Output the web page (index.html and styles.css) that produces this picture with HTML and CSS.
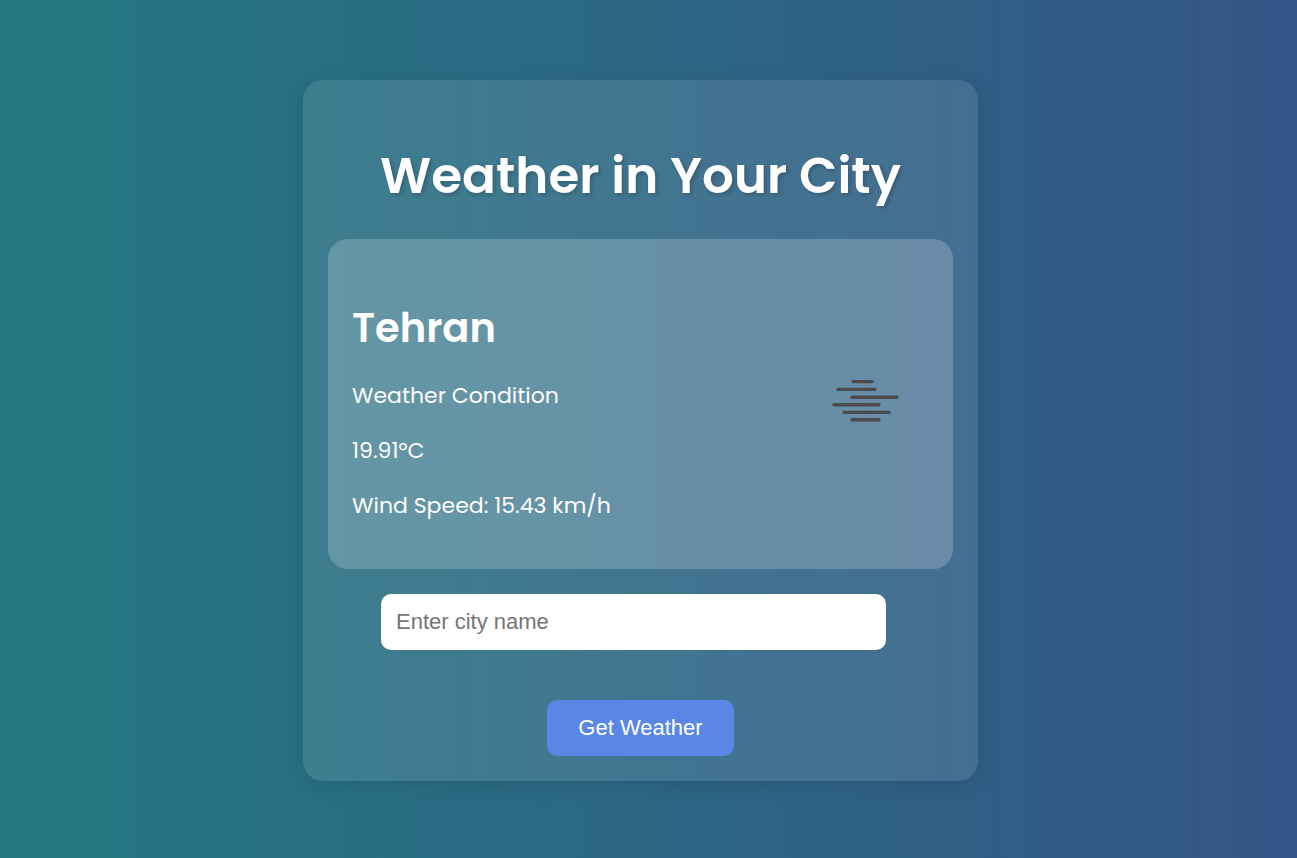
FILE: index.html
```
<!DOCTYPE html>
<html lang="en">
<head>
<meta charset="utf-8">
<meta name="viewport" content="width=device-width, initial-scale=1">
<title>Weather in Your City</title>
<link rel="stylesheet" href="styles.css">
</head>
<body>
<main class="container">
  <h1 class="title">Weather in Your City</h1>
  <section class="weather">
    <div class="details">
      <h2 class="city">Tehran</h2>
      <p class="line">Weather Condition</p>
      <p class="line">19.91°C</p>
      <p class="line">Wind Speed: 15.43 km/h</p>
    </div>
    <svg class="icon" viewBox="0 0 126 126" role="img" aria-label="Mist">
      <g stroke="#4b4b4d" stroke-width="3.4" stroke-linecap="round">
        <path d="M51 40.6H70M36 48.4H73M50 56.2H95M32 63.8H77M42 71.4H87M50 78.8H77"/>
      </g>
    </svg>
  </section>
  <form class="search">
    <input class="field" type="text" placeholder="Enter city name" aria-label="City name">
    <button class="submit" type="button">Get Weather</button>
  </form>
</main>
</body>
</html>
```
FILE: styles.css
```
* {
  box-sizing: border-box;
}

body {
  margin: 0;
  padding: 80px 16px 77px 0;
  min-height: 100vh;
  background: linear-gradient(to right, #247881, #345587);
  color: #fff;
  font-family: Poppins, Inter, sans-serif;
}

.container {
  width: 100%;
  max-width: 675px;
  margin: 0 auto;
  padding: 25px;
  border-radius: 20px;
  background: rgba(255, 255, 255, 0.1);
  box-shadow: 0 4px 20px rgba(0, 0, 0, 0.1);
}

.title {
  margin: 33px 0 25px;
  font-size: 50px;
  font-weight: 600;
  line-height: 76px;
  text-align: center;
  text-shadow: 2px 2px 4px rgba(0, 0, 0, 0.2);
}

.weather {
  display: flex;
  align-items: center;
  justify-content: space-between;
  padding: 25px 25px 25px 24px;
  border-radius: 20px;
  background: rgba(255, 255, 255, 0.2);
}

.city {
  margin: 34px 0 21px;
  font-size: 40px;
  font-weight: 600;
  line-height: 60px;
}

.line {
  margin: 0 0 22px;
  font-size: 22px;
  line-height: 33px;
}

.icon {
  width: 126px;
  height: 126px;
}

.search {
  display: flex;
  flex-direction: column;
  align-items: center;
  gap: 50px;
  margin-top: 25px;
}

.field,
.submit {
  height: 56px;
  border: 0;
  border-radius: 10px;
  font-family: "Liberation Sans", Arial, sans-serif;
  font-size: 22px;
}

.field {
  width: calc(100% - 120px);
  margin-right: 14px;
  padding: 0 15px;
  background: #fff;
}

.field::placeholder {
  color: #757575;
}

.submit {
  padding: 0 31px;
  background: #5a87e5;
  color: #fff;
}
```
